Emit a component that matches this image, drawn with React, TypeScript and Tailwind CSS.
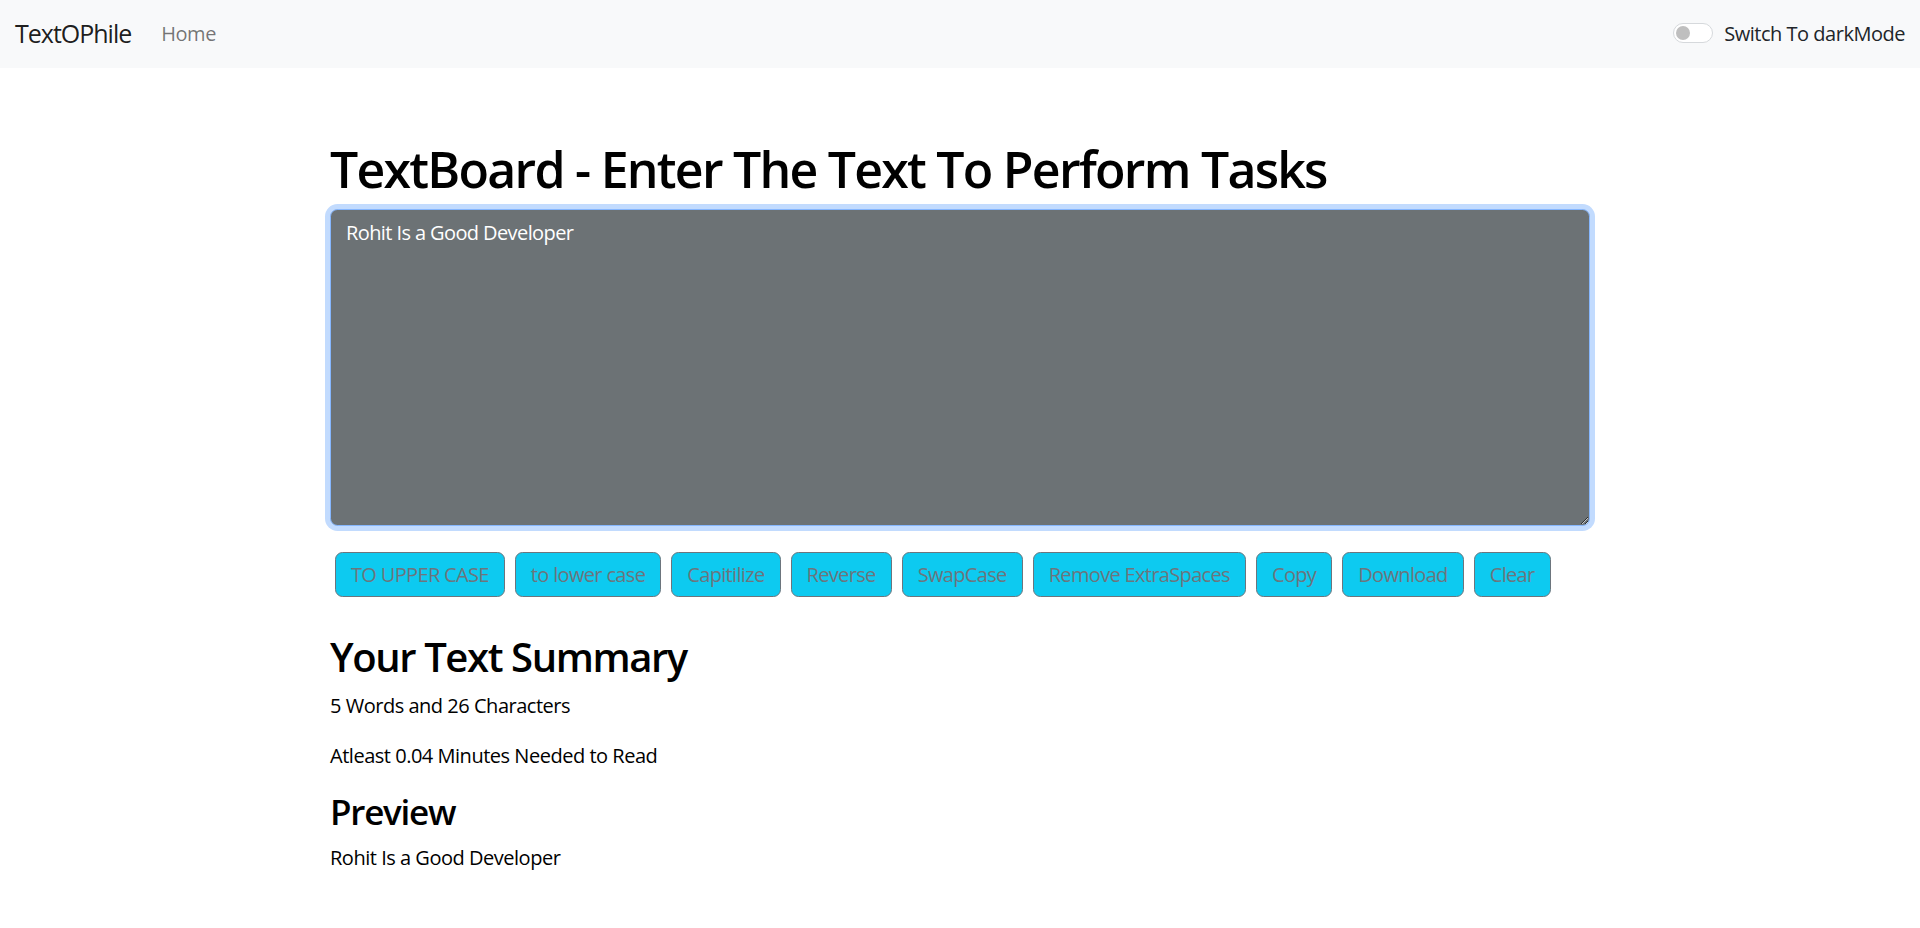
import React, { useEffect, useRef, useState } from 'react';

const font = { fontFamily: '"Open Sans", "Noto Sans", sans-serif' };

const actions = [
    'TO UPPER CASE',
    'to lower case',
    'Capitilize',
    'Reverse',
    'SwapCase',
    'Remove ExtraSpaces',
    'Copy',
    'Download',
    'Clear',
];

const Navbar = () => (
    <nav className="h-[68px] bg-[#f8f9fa] flex items-center justify-between px-[15px] tracking-[-0.03em]">
        <div className="flex items-center">
            <span className="text-[25px] leading-[37.5px] text-black/90 mr-[20px] tracking-[-0.04em]">TextOPhile</span>
            <a href="#" className="text-[20px] leading-[30px] text-black/55 px-[10px]">Home</a>
        </div>
        <label className="flex items-center text-[20px] leading-[30px] text-[#212529]">
            <span className="relative w-[40px] h-[20px] -mt-[3px] rounded-full border border-[#d6d9dc] bg-white mr-[11px]">
                <span className="absolute left-[2px] top-[2px] w-[14px] h-[14px] rounded-full bg-[#bfbfbf]" />
            </span>
            Switch To darkMode
        </label>
    </nav>
);

export default function App() {
    const [text, setText] = useState('Rohit Is a Good Developer ');
    const areaRef = useRef<HTMLTextAreaElement>(null);
    const words = text.split(/\s+/).filter((w) => w.length > 0).length;

    useEffect(() => {
        const el = areaRef.current;
        if (el) {
            el.focus();
            el.setSelectionRange(el.value.length, el.value.length);
        }
    }, []);

    return (
        <div className="min-h-screen bg-white text-black tracking-[-0.03em]" style={font}>
            <Navbar />

            <div className="w-[1260px] mx-auto">
                {/* Text input */}
                <h1 className="mt-[71px] mb-[10px] text-[50px] leading-[60px] font-semibold tracking-[-0.035em]">
                    TextBoard - Enter The Text To Perform Tasks
                </h1>
                <textarea
                    ref={areaRef}
                    value={text}
                    onChange={(e) => setText(e.target.value)}
                    rows={10}
                    className="block w-full h-[317px] rounded-[7.5px] border border-[#86b7fe] bg-[#6c7275] text-white caret-white text-[20px] leading-[30px] px-[15px] py-[7.5px] outline-none shadow-[0_0_0_5px_#c2dbfe] resize-y tracking-[-0.03em]"
                />

                {/* Buttons */}
                <div className="flex flex-wrap gap-[10px] px-[5px] mt-[26px]">
                    {actions.map((a) => (
                        <button
                            key={a}
                            className="h-[45px] px-[15px] text-[20px] leading-[30px] tracking-[-0.033em] text-[#6c757d] bg-[#0dcaf0] border border-[#6c757d] rounded-[7.5px]"
                        >
                            {a}
                        </button>
                    ))}
                </div>

                {/* Summary */}
                <h2 className="mt-[36px] mb-[10px] text-[40px] leading-[48px] font-semibold tracking-[-0.035em]">Your Text Summary</h2>
                <p className="text-[20px] leading-[30px] mb-[20px]">
                    {words} Words and {text.length} Characters
                </p>
                <p className="text-[20px] leading-[30px] mb-[20px]">
                    Atleast {(0.008 * words).toFixed(2)} Minutes Needed to Read
                </p>
                <h3 className="mb-[10px] text-[35px] leading-[42px] font-semibold tracking-[-0.035em]">Preview</h3>
                <p className="text-[20px] leading-[30px]">{text}</p>
            </div>
        </div>
    );
}
